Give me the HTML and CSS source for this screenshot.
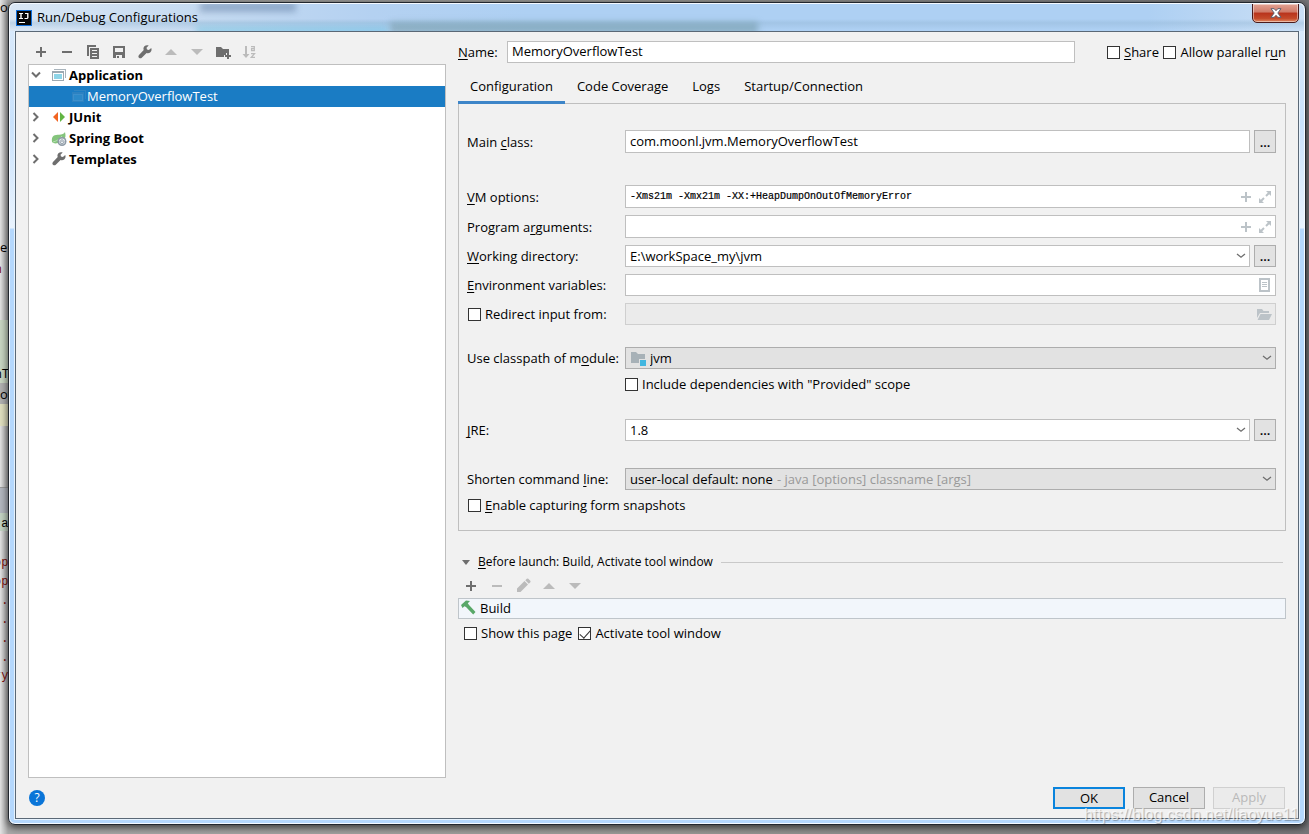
FILE: index.html
```html
<!DOCTYPE html>
<html lang="en">
<head>
<meta charset="utf-8">
<title>Run/Debug Configurations</title>
<link rel="stylesheet" href="styles.css">
</head>
<body>
<svg class="sprite" aria-hidden="true">
  <symbol id="plus" viewBox="0 0 16 16"><path d="M7 3h2v4h4v2H9v4H7V9H3V7h4z"/></symbol>
  <symbol id="minus" viewBox="0 0 16 16"><path d="M3 7h10v2H3z"/></symbol>
  <symbol id="up" viewBox="0 0 16 16"><path d="M8 5l6 6H2z"/></symbol>
  <symbol id="down" viewBox="0 0 16 16"><path d="M2 5h12l-6 6z"/></symbol>
  <symbol id="wrench" viewBox="0 0 16 16"><path d="M13.800 4.300l-2.300 2.200-1.900-.5-.5-1.900L11.300 1.900C9.800 1.200 8 1.600 7 2.700 6 3.800 5.800 5.200 6.300 6.500L1.600 11.300c-.8.800-.8 2 0 2.800s2 .8 2.800 0L9.200 9.400c1.300.5 2.800.2 3.800-.8 1.200-1.100 1.500-2.900.8-4.300z" transform="translate(.4 -.4)"/></symbol>
  <symbol id="chevron" viewBox="0 0 10 6"><path d="M1 1l4 3.200L9 1" fill="none" stroke="#6e6e6e" stroke-width="1.300"/></symbol>
  <symbol id="twig" viewBox="0 0 10 10"><path d="M2.500 1l4 4-4 4" fill="none" stroke="#6e6e6e" stroke-width="2"/></symbol>
  <symbol id="app" viewBox="0 0 16 16"><path d="M3 2h12v9h-1V3H3z" fill="#a9b4bc"/><path d="M1 4h12v10H1z" fill="#9da9b1"/><path d="M2 6h10v7H2z" fill="#fff"/><path d="M3 7h8v5H3z" fill="#8ed5e8"/></symbol>
  <symbol id="expand" viewBox="0 0 14 14"><path d="M8 1h5v5l-1.800-1.800L8.700 6.700 7.300 5.300l2.500-2.500zM1 8l1.800 1.800 2.500-2.500 1.400 1.400-2.500 2.500L6 13H1z"/></symbol>
</svg>

<div class="desktop" aria-hidden="true">
  <span class="band band-green"></span><span class="band band-gray"></span><span class="band band-yellow"></span><span class="band band-steel"></span><span class="band band-mint"></span>
  <span class="scrap s1">or</span><span class="scrap s2">e</span><span class="scrap s3 red">n</span><span class="scrap s4">nT</span><span class="scrap s5">ow</span>
  <span class="scrap mono s6">ja</span><span class="scrap mono red s7">op</span><span class="scrap mono red s8">op</span><span class="scrap mono red s9">..</span><span class="scrap mono red s10">..</span><span class="scrap mono red s11">..</span><span class="scrap mono red s12">..</span><span class="scrap mono red s13">ry</span>
</div>

<div class="window">
  <header class="titlebar">
    <svg class="logo" viewBox="0 0 16 16"><path fill="#0f6fdc" d="M0 0h16v16H0z"/><path fill="#080808" d="M1 1h14v14H1z"/><path fill="#fff" d="M3 3h4v1H5.700v4H7v1H3V8h1.300V4H3zM9 3h3.500v5l-1 1H8.500V8h2.600V4H9zM3 12h6v1H3z"/></svg>
    <h1>Run/Debug Configurations</h1>
    <span class="ghost ghost-a"></span><span class="ghost ghost-b"></span><span class="ghost ghost-c"></span>
    <button class="close" aria-label="Close"><svg viewBox="0 0 12 10"><path d="M1 .7h3.200L6 2.700 7.800.7H11L7.800 5 11 9.300H7.800L6 7.300 4.200 9.300H1L4.200 5z" fill="#fff" stroke="#5d5f70"/></svg></button>
  </header>

  <main class="client">
    <div class="columns">
      <section class="left">
        <div class="toolbar">
          <button aria-label="Add"><svg><use href="#plus"/></svg></button>
          <button aria-label="Remove"><svg><use href="#minus"/></svg></button>
          <button aria-label="Copy"><svg viewBox="0 0 16 16"><path fill-rule="evenodd" d="M2 1h9v2H4v9H2zM5 4h9v11H5zm2 2v1h5V6zm0 3v1h5V9zm0 3v1h5v-1z"/></svg></button>
          <button aria-label="Save"><svg viewBox="0 0 16 16"><path fill-rule="evenodd" d="M2 2h12v12h-3v-3H5v3H2zm2 2v4h8V4zM6 12h2v2H6z"/></svg></button>
          <button aria-label="Edit templates"><svg><use href="#wrench"/></svg></button>
          <button aria-label="Move up" disabled><svg><use href="#up"/></svg></button>
          <button aria-label="Move down" disabled><svg><use href="#down"/></svg></button>
          <button aria-label="Create folder"><svg viewBox="0 0 16 16"><path d="M1 3h5l2 2h6v4h-3v2H9v2H1zM12 9h2v2h2v2h-2v2h-2v-2h-2v-2h2z"/></svg></button>
          <button aria-label="Sort" disabled><svg viewBox="0 0 16 16"><path d="M4 2h2v8h2.500L5 14 1.500 10H4z"/><path fill="none" stroke="#bbb" stroke-width="1.300" d="M10 2.700h3.300v4H10.600V4.700h2.700M10 9.700h3.500L10.300 13.400H14"/></svg></button>
        </div>
        <ul class="tree" role="tree">
          <li class="node" role="treeitem"><svg class="twig open"><use href="#twig"/></svg><svg class="ico"><use href="#app"/></svg>Application</li>
          <li class="node child selected" role="treeitem" aria-selected="true"><svg class="ico faint"><use href="#app"/></svg>MemoryOverflowTest</li>
          <li class="node" role="treeitem"><svg class="twig"><use href="#twig"/></svg><svg class="ico" viewBox="0 0 16 16"><path d="M7 3v10L2 8z" fill="#f26522"/><path d="M9 3v10l5-5z" fill="#62b543"/></svg>JUnit</li>
          <li class="node" role="treeitem"><svg class="twig"><use href="#twig"/></svg><svg class="ico" viewBox="0 0 16 16"><path d="M14 2c1 4 .5 6-1 7-3-1-6 1-6 4-3 1-5 0-6-1C0 5 4 5 8 4.800 11 4.700 13 4 14 2z" fill="#84c47c"/><path d="M2 12c4-1 7-3 9-6" stroke="#d9efd5" fill="none" stroke-width=".6"/><circle cx="11" cy="11.500" r="4.500" fill="#8d99a5"/><circle cx="11" cy="11.500" r="3" fill="#e8edf0"/><path d="M11 9v3M9.500 10.500a2 2 0 1 0 3 0" stroke="#8d99a5" fill="none"/></svg>Spring Boot</li>
          <li class="node" role="treeitem"><svg class="twig"><use href="#twig"/></svg><svg class="ico"><use href="#wrench"/></svg>Templates</li>
        </ul>
      </section>

      <section class="right">
        <div class="name-row">
          <label class="name-label" for="name"><u>N</u>ame:</label>
          <input class="field grow" id="name" value="MemoryOverflowTest">
          <div class="name-checks">
            <label class="check"><input type="checkbox"><span><u>S</u>hare</span></label>
            <label class="check"><input type="checkbox"><span>Allow parallel r<u>u</u>n</span></label>
          </div>
        </div>
        <nav class="tabs" role="tablist">
          <button class="tab active" role="tab" aria-selected="true">Configuration</button>
          <button class="tab" role="tab">Code Coverage</button>
          <button class="tab" role="tab">Logs</button>
          <button class="tab" role="tab">Startup/Connection</button>
        </nav>
        <div class="pane">
          <div class="row tall after-large"><label for="main">Main <u>c</u>lass:</label><div class="control"><input class="field grow" id="main" value="com.moonl.jvm.MemoryOverflowTest"><button class="more" aria-label="Browse class">...</button></div></div>
          <div class="row tall"><label for="vm"><u>V</u>M options:</label><div class="control box"><input class="code" id="vm" value="-Xms21m -Xmx21m -XX:+HeapDumpOnOutOfMemoryError"><button class="inner" aria-label="Insert macro"><svg class="i16"><use href="#plus"/></svg></button><button class="inner" aria-label="Expand"><svg class="i14"><use href="#expand"/></svg></button></div></div>
          <div class="row tall"><label for="args">Program a<u>r</u>guments:</label><div class="control box"><input id="args"><button class="inner" aria-label="Insert macro"><svg class="i16"><use href="#plus"/></svg></button><button class="inner" aria-label="Expand"><svg class="i14"><use href="#expand"/></svg></button></div></div>
          <div class="row"><label for="dir"><u>W</u>orking directory:</label><div class="control"><div class="box grow"><input id="dir" value="E:\workSpace_my\jvm"><button class="inner" aria-label="History"><svg class="chev"><use href="#chevron"/></svg></button></div><button class="more" aria-label="Browse directory">...</button></div></div>
          <div class="row"><label for="env"><u>E</u>nvironment variables:</label><div class="control box"><input id="env"><button class="inner" aria-label="Edit variables"><svg class="i16" viewBox="0 0 16 16"><path fill-rule="evenodd" d="M3 1h11v14H3zm2 2v10h7V3z"/><path d="M6 5h5v1H6zm0 2h5v1H6zm0 2h5v1H6z"/></svg></button></div></div>
          <div class="row after-medium"><label class="check"><input type="checkbox"><span>Redirect input from:</span></label><div class="control box disabled"><input aria-label="Redirect input file" disabled><button class="inner" aria-label="Browse" disabled><svg class="i16" viewBox="0 0 16 16"><path d="M1 3h5l1.500 2H13v2H4l-3 5zM4.500 8H16l-3 6H1.500z"/></svg></button></div></div>
          <div class="row tight"><label for="module">Use classpath of m<u>o</u>dule:</label><div class="control box gray"><svg class="i16" viewBox="0 0 16 16"><path d="M1 2h5l2 2h7v5H9v4H1z" fill="#a7b1b7"/><path d="M10 10h6v6h-6z" fill="#40b6e0"/></svg><select class="grow" id="module"><option>jvm</option></select><svg class="chev"><use href="#chevron"/></svg></div></div>
          <div class="row provided"><label class="check second"><input type="checkbox"><span>Include dependencies with "Provided" scope</span></label></div>
          <div class="row after-jre"><label for="jre"><u>J</u>RE:</label><div class="control"><div class="box grow"><input id="jre" value="1.8"><button class="inner" aria-label="JRE list"><svg class="chev"><use href="#chevron"/></svg></button></div><button class="more" aria-label="Browse JRE">...</button></div></div>
          <div class="row tight"><label for="shorten">Shorten command <u>l</u>ine:</label><div class="control box gray"><select id="shorten"><option>user-local default: none</option></select><span class="hint">- java [options] classname [args]</span><svg class="chev"><use href="#chevron"/></svg></div></div>
          <div class="row"><label class="check wide"><input type="checkbox"><span><u>E</u>nable capturing form snapshots</span></label></div>
        </div>

        <div class="launch">
          <h2><svg class="fold" viewBox="0 0 8 5"><path d="M0 0h8L4 5z"/></svg><span><u>B</u>efore launch: Build, Activate tool window</span></h2>
          <div class="toolbar small">
            <button aria-label="Add task"><svg><use href="#plus"/></svg></button>
            <button aria-label="Remove task" disabled><svg><use href="#minus"/></svg></button>
            <button aria-label="Edit task" disabled><svg viewBox="0 0 16 16"><path d="M2 14v-3.500L9.500 3 13 6.500 5.500 14zM10.300 2.200L11.800.8q.8-.6 1.500 0l2 2q.6.800 0 1.500L13.800 5.700z"/></svg></button>
            <button aria-label="Move task up" disabled><svg><use href="#up"/></svg></button>
            <button aria-label="Move task down" disabled><svg><use href="#down"/></svg></button>
          </div>
          <ul class="tasks"><li><svg class="i16" viewBox="0 0 16 16"><path d="M1 5l5-4.500L10 1 7.800 3.200 9 5l6.500 7-2.300 2.500L6 7 4.500 6.200 2.500 8z" fill="#59a869"/></svg>Build</li></ul>
          <div class="launch-checks">
            <label class="check"><input type="checkbox"><span>Show this page</span></label>
            <label class="check"><input type="checkbox" checked><span>Activate tool window</span></label>
          </div>
        </div>
      </section>
    </div>

    <footer class="footer">
      <button class="help" aria-label="Help">?</button>
      <div class="actions"><button class="btn primary">OK</button><button class="btn">Cancel</button><button class="btn" disabled>Apply</button></div>
    </footer>
  </main>
</div>
<div class="watermark">https://blog.csdn.net/liaoyue11</div>
</body>
</html>
```

FILE: styles.css
```css
* { box-sizing: border-box; }
body {
  margin: 0;
  min-height: 100vh;
  padding: 2px 3px 9px 8px;
  display: flex;
  position: relative;
  overflow: hidden;
  background: linear-gradient(90deg, #e4e4e4 0, #a8a8a8 8px, #9a9a96 50%, #77777a 100%);
  font: 13px/18px "Open Sans", "Noto Sans", sans-serif;
  color: #000;
}
button, input, select { font: inherit; color: inherit; margin: 0; padding: 0; border: 0; background: none; }
input, select { outline: 0; min-width: 0; }
select { appearance: none; }
h1, h2, ul { margin: 0; padding: 0; font-weight: 400; list-style: none; }
u { text-underline-offset: 2px; text-decoration-thickness: 1px; text-decoration-skip-ink: none; }
svg { display: block; flex: none; }
.sprite { position: absolute; width: 0; height: 0; }
.grow { flex: 1; }

/* Editor showing behind the dialog */
.desktop { position: absolute; inset: 0 auto 0 0; width: 9px; overflow: hidden; }
.scrap { position: absolute; left: 0; white-space: nowrap; }
.mono { left: -6px; font: 12px/18px "Liberation Mono", monospace; }
.red { color: #7a0c0c; }
.band { position: absolute; left: 0; right: 0; }
.band-green { top: 320px; height: 64px; background: #c9d6c2; }
.band-gray { top: 383px; height: 21px; background: #b1b1b1; }
.band-yellow { top: 404px; height: 22px; background: #e0dfbf; }
.band-steel { top: 487px; height: 26px; background: #b3b7bf; border-top: 1px solid #999; }
.band-mint { top: 513px; height: 18px; background: #c3d3c3; }
.s1 { top: -2px; }
.s2 { top: 238px; }
.s3 { top: 259px; left: -6px; }
.s4 { top: 364px; left: -6px; }
.s5 { top: 385px; }
.s6 { top: 515px; }
.s7 { top: 554px; }
.s8 { top: 573px; }
.s9 { top: 592px; }
.s10 { top: 611px; }
.s11 { top: 630px; }
.s12 { top: 649px; }
.s13 { top: 667px; }

/* Window frame */
.window {
  position: relative;
  flex: 1;
  min-width: 0;
  display: flex;
  flex-direction: column;
  padding: 0 6px 5px;
  border: 1px solid #22272e;
  border-radius: 7px;
  background: linear-gradient(180deg, #dcebfa 0, #d8e9fb 28px, #c9e2fc 120px, #e9f3fe 225px, #b5d8fd 226px, #b5d8fd 100%);
  box-shadow: inset 0 0 0 1px #f4f9ff, 0 2px 7px 1px rgba(0, 0, 0, .6);
}
.titlebar {
  height: 28px;
  margin: 0 -5px;
  padding: 0 5px 0 6px;
  display: flex;
  align-items: center;
  gap: 5px;
  position: relative;
  overflow: hidden;
  border-radius: 6px 6px 0 0;
  border-top: 1px solid #f4f9ff;
  background: linear-gradient(180deg, transparent 55%, rgba(145, 180, 210, .4) 70%, transparent 95%), linear-gradient(90deg, #d9e6f4 0, #c5daf1 15%, #b4d1f1 28%, #aed0f3 40%, #aed0f3 88%, #cadff5 100%);
}
.logo { width: 16px; height: 16px; }
h1 { font-size: 13px; line-height: 18px; position: relative; padding-bottom: 1px; }
.ghost { position: absolute; filter: blur(3px); }
.ghost-a { left: 190px; top: -2px; width: 96px; height: 10px; background: rgba(75, 105, 145, .4); }
.ghost-b { left: 380px; top: 18px; width: 368px; height: 12px; background: rgba(105, 145, 155, .5); }
.ghost-c { left: 186px; top: 22px; width: 192px; height: 10px; background: rgba(90, 190, 220, .4); }
.close {
  position: absolute;
  top: -1px;
  right: 5px;
  width: 47px;
  height: 20px;
  display: grid;
  place-items: center;
  border: 1px solid #4b1b1b;
  border-radius: 0 0 5px 5px;
  background: linear-gradient(180deg, #e3a394 0, #cf7a68 45%, #b8331c 50%, #c44a2a 80%, #e08a63 100%);
  box-shadow: inset 0 0 0 1px rgba(255, 255, 255, .45);
}
.close svg { width: 12px; height: 10px; }
.client {
  flex: 1;
  display: flex;
  flex-direction: column;
  padding: 8px 12px 9px;
  border: 1px solid #5a6876;
  box-shadow: 0 0 0 1px #e6f2fd;
  background: #f1f1f1;
}
.columns { flex: 1; display: grid; grid-template-columns: 418px minmax(0, 1fr); gap: 12px; }

/* Configuration tree */
.left { display: flex; flex-direction: column; }
.toolbar { display: flex; height: 24px; fill: #6e6e6e; }
.toolbar button { width: 26px; display: grid; place-items: center; }
.toolbar svg { width: 16px; height: 16px; }
.toolbar button:disabled { fill: #bbb; }
.tree { flex: 1; border: 1px solid #bfbfbf; background: #fff; }
.node { display: flex; align-items: center; height: 21px; padding: 0 0 2px 2px; font-weight: 700; }
.twig { width: 10px; height: 10px; margin-right: 10px; }
.twig.open { transform: rotate(90deg); }
.ico { width: 16px; height: 16px; margin-right: 2px; fill: #6e6e6e; }
.child { padding-left: 42px; font-weight: 400; }
.selected { background: #1a7cc4; color: #fff; }
.faint { opacity: .15; margin-right: 0; }

/* Right side */
.name-row { display: flex; align-items: center; margin-top: 1px; }
.name-label { width: 49px; }
.field, .box { height: 22px; border: 1px solid #bfbfbf; background: #fff; }
.field { padding: 0 4px 2px; }
.name-label, .name-checks span { padding-bottom: 1px; }
.name-checks { width: 179px; margin-left: 32px; display: flex; justify-content: space-between; white-space: nowrap; }
.check { display: flex; align-items: center; gap: 4px; white-space: nowrap; }
input[type="checkbox"] { appearance: none; flex: none; width: 13px; height: 13px; border: 1px solid #333; background: #fff; }
input[type="checkbox"]:checked::before {
  content: "";
  display: block;
  width: 9px;
  height: 5px;
  margin: 2px 1px;
  border: solid #333;
  border-width: 0 0 1px 1px;
  transform: rotate(-48deg);
}
.tabs { display: flex; height: 41px; padding-top: 7px; }
.tab { padding: 0 12px; border-bottom: 3px solid transparent; position: relative; }
.tab.active { border-bottom-color: #3d85c8; }
.pane { margin-top: -1px; padding: 26px 9px 14px 8px; border: 1px solid #bfbfbf; display: flex; flex-direction: column; gap: 7px; }
.row { display: grid; grid-template-columns: 158px minmax(0, 1fr); align-items: center; min-height: 22px; }
.row.tall .field, .row.tall .box, .tall .more, .row.tall .control { height: 23px; }
.after-large { margin-bottom: 25px; }
.after-medium { margin-bottom: 15px; }
.after-jre { margin-bottom: 20px; }
.tight { margin-bottom: -3px; }
.provided { margin-bottom: 17px; }
.control { display: flex; align-items: center; gap: 4px; }
.row .check { padding-left: 1px; }
.row .second { grid-column: 2; padding: 0; }
.row .wide { grid-column: 1 / -1; }
.box { display: flex; align-items: center; padding: 0 3px 0 4px; gap: 4px; }
.box > input { flex: 1; height: 100%; }
.code { font: 10px/18px "Liberation Mono", monospace; -webkit-text-stroke: 0.2px #000; }
.inner { fill: #bcc3c8; }
.disabled { background: #ebebeb; border-color: #cfcfcf; }
.gray { background: #e2e2e2; border-color: #adadad; }
.i16 { width: 16px; height: 16px; }
.i14 { width: 14px; height: 14px; }
.chev { width: 10px; height: 6px; margin-left: auto; }
.hint { color: #999; }
.more { width: 22px; height: 22px; border: 1px solid #adadad; background: #e2e2e2; font-weight: 600; line-height: 16px; }

/* Before launch */
.launch { padding-top: 22px; }
h2 { display: flex; align-items: center; gap: 8px; padding: 0 3px 0 4px; font-size: 12px; line-height: 18px; }
h2::after { content: ""; flex: 1; border-top: 1px solid #c9c9c9; }
.fold { width: 8px; height: 5px; fill: #6e6e6e; }
.small { margin: 3px 0 0; }
.tasks { border: 1px solid #bfc5ca; background: #f2f6fb; }
.tasks li { display: flex; align-items: center; gap: 4px; height: 19px; padding: 0 0 1px 1px; }
.launch-checks { display: flex; gap: 6px; padding: 5px 6px; }

.footer { display: flex; justify-content: space-between; align-items: center; padding-top: 9px; }
.help { width: 16px; height: 16px; margin-left: 1px; border-radius: 50%; background: #0a75d8; color: #fff; font-size: 12px; line-height: 16px; }
.actions { display: flex; gap: 8px; padding-right: 1px; }
.btn { width: 72px; height: 22px; border: 1px solid #adadad; background: #e2e2e2; line-height: 18px; padding-bottom: 2px; }
.primary { border: 2px solid #0a84dd; }
.btn:disabled { border-color: #d0d0d0; background: #ebebeb; color: #b9b9b9; }
.watermark {
  position: absolute;
  right: 10px;
  bottom: 9px;
  font: 16px/20px "Liberation Sans", sans-serif;
  color: rgba(255, 255, 255, .7);
  text-shadow: 1px 1px 1px rgba(0, 0, 0, .3);
  pointer-events: none;
}
```
